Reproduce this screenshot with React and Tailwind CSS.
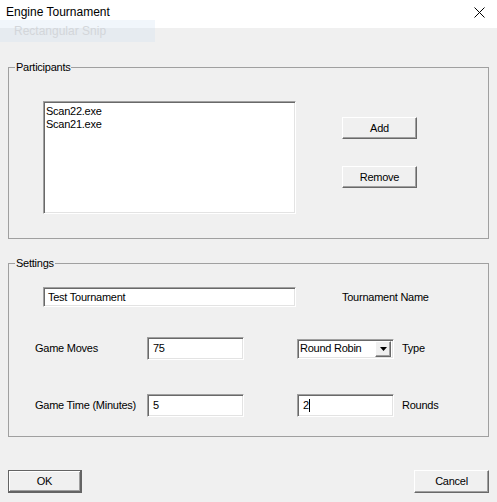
import React from "react";

const sunken =
  "bg-white border border-t-[#a0a0a0] border-l-[#a0a0a0] border-b-white border-r-white shadow-[inset_1px_1px_0_#696969,inset_-1px_-1px_0_#e3e3e3]";
const raised =
  "bg-[#f0f0f0] border border-t-white border-l-white border-b-[#696969] border-r-[#696969] shadow-[inset_-1px_-1px_0_#a0a0a0]";

const Button = ({ children, className = "" }) => (
  <div className={`flex items-center justify-center cursor-default ${raised} ${className}`}>
    {children}
  </div>
);

const Field = ({ value, className = "", caret = false }) => (
  <div className={`flex items-center pl-[5px] ${sunken} ${className}`}>
    <span>{value}</span>
    {caret && <span className="w-px h-[13px] bg-black" />}
  </div>
);

const App = () => {
  return (
    <div
      className="relative w-[497px] h-[502px] bg-[#f0f0f0] text-[11px] tracking-[-0.25px] text-black leading-[13px] overflow-hidden select-none"
      style={{ fontFamily: '"Liberation Sans", Arial, sans-serif' }}
    >
      {/* title bar */}
      <div className="h-[28px] bg-white flex items-center justify-between pl-[6px] pr-[12px]">
        <span className="text-[12px] tracking-normal mt-[-4px]">Engine Tournament</span>
        <svg width="11" height="11" viewBox="0 0 11 11" className="mt-[-4px]">
          <path d="M0.5 0.5 L10.5 10.5 M10.5 0.5 L0.5 10.5" stroke="#000" strokeWidth="1" />
        </svg>
      </div>

      {/* leftover snip tooltip */}
      <div className="absolute left-0 top-[20px] w-[155px] h-[22px] bg-[rgba(205,222,240,0.28)] flex items-center pl-[14px]">
        <span className="text-[12px] tracking-normal text-[#d3d6da]">Rectangular Snip</span>
      </div>

      <div className="px-[8px]">
        {/* Participants */}
        <fieldset className="mt-[33px] border border-[#a0a0a0] pb-[24px]">
          <legend className="ml-[6px] px-[1px]">Participants</legend>
          <div className="flex pt-[27px] pl-[34px]">
            <div className={`w-[253px] h-[113px] pt-[3px] pl-[2px] ${sunken}`}>
              <div>Scan22.exe</div>
              <div>Scan21.exe</div>
            </div>
            <div className="ml-[46px] pt-[16px] flex flex-col gap-[27px]">
              <Button className="w-[75px] h-[22px]">Add</Button>
              <Button className="w-[75px] h-[22px]">Remove</Button>
            </div>
          </div>
        </fieldset>

        {/* Settings */}
        <fieldset className="mt-[18px] border border-[#a0a0a0] pb-[19px]">
          <legend className="ml-[6px] px-[1px]">Settings</legend>
          <div className="pt-[17px] flex flex-col">
            <div className="flex items-center pl-[34px]">
              <Field value="Test Tournament" className="w-[253px] h-[20px] !pl-[4px]" />
              <span className="ml-[46px]">Tournament Name</span>
            </div>

            <div className="flex items-center pl-[26px] mt-[30px] h-[23px]">
              <span className="w-[112px]">Game Moves</span>
              <Field value="75" className="w-[97px] h-[23px]" />
              <div className={`ml-[53px] w-[97px] h-[20px] flex items-center justify-between pl-[2px] pr-[2px] ${sunken}`}>
                <span>Round Robin</span>
                <div className={`w-[16px] h-[16px] flex items-center justify-center ${raised}`}>
                  <svg width="7" height="4" viewBox="0 0 7 4">
                    <path d="M0 0 H7 L3.5 4 Z" fill="#000" />
                  </svg>
                </div>
              </div>
              <span className="ml-[8px]">Type</span>
            </div>

            <div className="flex items-center pl-[26px] mt-[34px] h-[23px]">
              <span className="w-[112px]">Game Time (Minutes)</span>
              <Field value="5" className="w-[97px] h-[23px]" />
              <Field value="2" caret className="ml-[53px] w-[97px] h-[23px]" />
              <span className="ml-[8px]">Rounds</span>
            </div>
          </div>
        </fieldset>

        {/* dialog buttons */}
        <div className="flex justify-between mt-[33px]">
          <div className="w-[74px] h-[23px] flex items-center justify-center border border-[#646464] border-b-2 border-r-2 bg-[#f0f0f0] shadow-[inset_1px_1px_0_#ffffff,inset_-1px_-1px_0_#a0a0a0]">
            OK
          </div>
          <Button className="w-[75px] h-[23px]">Cancel</Button>
        </div>
      </div>
    </div>
  );
};

export default App;
